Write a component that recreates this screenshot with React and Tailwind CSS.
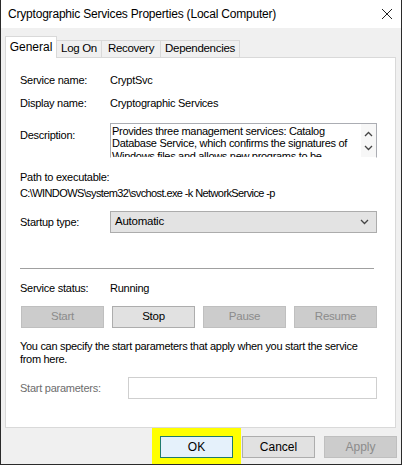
import React, { useState } from 'react';

const tabs = [
  { name: 'General', w: 'w-[52px]' },
  { name: 'Log On', w: 'w-[45px]' },
  { name: 'Recovery', w: 'w-[59px]' },
  { name: 'Dependencies', w: 'w-[79px]' },
];

function Chevron({ up = false, className = '' }) {
  return (
    <svg width="9" height="6" viewBox="0 0 9 6" className={className}>
      <path
        d={up ? 'M1 5 L4.5 1.5 L8 5' : 'M1 1 L4.5 4.5 L8 1'}
        fill="none"
        stroke="#444"
        strokeWidth="1.3"
      />
    </svg>
  );
}

function ServiceButton({ label, disabled }) {
  return (
    <button
      className={`h-[22px] border text-[11.5px] ${
        disabled
          ? 'bg-[#cccccc] border-[#bfbfbf] text-[#8b8b8b]'
          : 'bg-[#e1e1e1] border-[#adadad] text-black'
      }`}
    >
      {label}
    </button>
  );
}

export default function App() {
  const [tab, setTab] = useState('General');

  return (
    <div className="w-[402px] h-[465px] flex flex-col bg-[#f0f0f0] border-x border-b border-[#2a2a2a] font-['Liberation_Sans',Arial,sans-serif] text-[11px] text-black overflow-hidden select-none">
      {/* title bar */}
      <div className="h-[28px] shrink-0 bg-white flex items-center justify-between pl-[7px] pr-[8px]">
        <span className="text-[12px] tracking-[-0.2px]">Cryptographic Services Properties (Local Computer)</span>
        <svg width="12" height="12" viewBox="0 0 12 12">
          <path d="M1 1 L11 11 M11 1 L1 11" stroke="#222" strokeWidth="1" />
        </svg>
      </div>

      {/* tabs */}
      <div className="mt-[8px] h-[21px] ml-[4px] flex items-end relative z-10">
        {tabs.map(t =>
          t.name === tab ? (
            <div
              key={t.name}
              className={`${t.w} h-[22px] -mb-px bg-white border-x border-t border-[#d9d9d9] flex items-center justify-center text-[12px] pb-[2px]`}
            >
              {t.name}
            </div>
          ) : (
            <button
              key={t.name}
              onClick={() => setTab(t.name)}
              className={`${t.w} h-[17px] bg-[#f0f0f0] border-t border-r border-[#d9d9d9] flex items-center justify-center text-[11.5px] tracking-[-0.3px]`}
            >
              {t.name}
            </button>
          )
        )}
      </div>

      {/* general page */}
      <div className="h-[371px] shrink-0 ml-[4px] mr-[5px] bg-white border border-[#d9d9d9] pl-[14px] pr-[18px] pt-[14px] flex flex-col tracking-[-0.25px]">
        <div className="flex leading-[16px]">
          <span className="w-[90px]">Service name:</span>
          <span>CryptSvc</span>
        </div>
        <div className="flex leading-[16px] mt-[7px]">
          <span className="w-[90px]">Display name:</span>
          <span>Cryptographic Services</span>
        </div>

        <div className="flex mt-[12px]">
          <span className="w-[90px] leading-[16px] mt-[4px]">Description:</span>
          <div className="flex-1 h-[35px] border border-[#abadb3] border-b-transparent flex overflow-hidden">
            <p className="flex-1 leading-[12.5px] pt-[0.5px] pl-px tracking-[-0.3px]">
              Provides three management services: Catalog Database Service, which confirms the signatures of Windows files and allows new programs to be installed.
            </p>
            <div className="w-[15px] shrink-0 bg-[#f7f7f7] flex flex-col items-center pt-[7px] gap-[8px]">
              <Chevron up />
              <Chevron />
            </div>
          </div>
        </div>

        <div className="mt-[11px] leading-[16px]">Path to executable:</div>
        <div className="leading-[16px] tracking-[-0.6px]">C:\WINDOWS\system32\svchost.exe -k NetworkService -p</div>

        <div className="flex items-center mt-[10px]">
          <span className="w-[90px]">Startup type:</span>
          <div className="flex-1 h-[22px] bg-[#e3e3e3] border border-[#acacac] flex items-center justify-between pl-[4px] pr-[7px]">
            <span className="text-[11.5px]">Automatic</span>
            <Chevron />
          </div>
        </div>

        <div className="mt-[35px] h-px bg-[#a0a0a0] mr-[3px]" />

        <div className="flex leading-[16px] mt-[11px]">
          <span className="w-[90px]">Service status:</span>
          <span>Running</span>
        </div>

        <div className="grid grid-cols-4 gap-[8px] mt-[10px] ml-px">
          <ServiceButton label="Start" disabled />
          <ServiceButton label="Stop" />
          <ServiceButton label="Pause" disabled />
          <ServiceButton label="Resume" disabled />
        </div>

        <p className="mt-[12px] leading-[13px] tracking-[-0.3px]">
          You can specify the start parameters that apply when you start the service from here.
        </p>

        <div className="flex items-center mt-[11px]">
          <span className="w-[108px] text-[#6d6d6d]">Start parameters:</span>
          <input
            disabled
            className="flex-1 h-[22px] border border-[#cfcfcf] bg-white outline-none"
          />
        </div>
      </div>

      {/* dialog buttons */}
      <div className="h-[36px] shrink-0 flex justify-end items-start pr-[4px]">
        <div className="h-full bg-[#ffff00] px-[8px] pt-[8px]">
          <button className="w-[73px] h-[22px] bg-[#e5f1fb] border border-[#1f7a6e] text-[12px]">OK</button>
        </div>
        <button className="ml-px mt-[8px] w-[73px] h-[22px] bg-[#e1e1e1] border border-[#adadad] text-[12px]">
          Cancel
        </button>
        <button className="ml-[9px] mt-[8px] w-[73px] h-[22px] bg-[#cccccc] border border-[#bfbfbf] text-[#8b8b8b] text-[12px]">
          Apply
        </button>
      </div>
    </div>
  );
}
